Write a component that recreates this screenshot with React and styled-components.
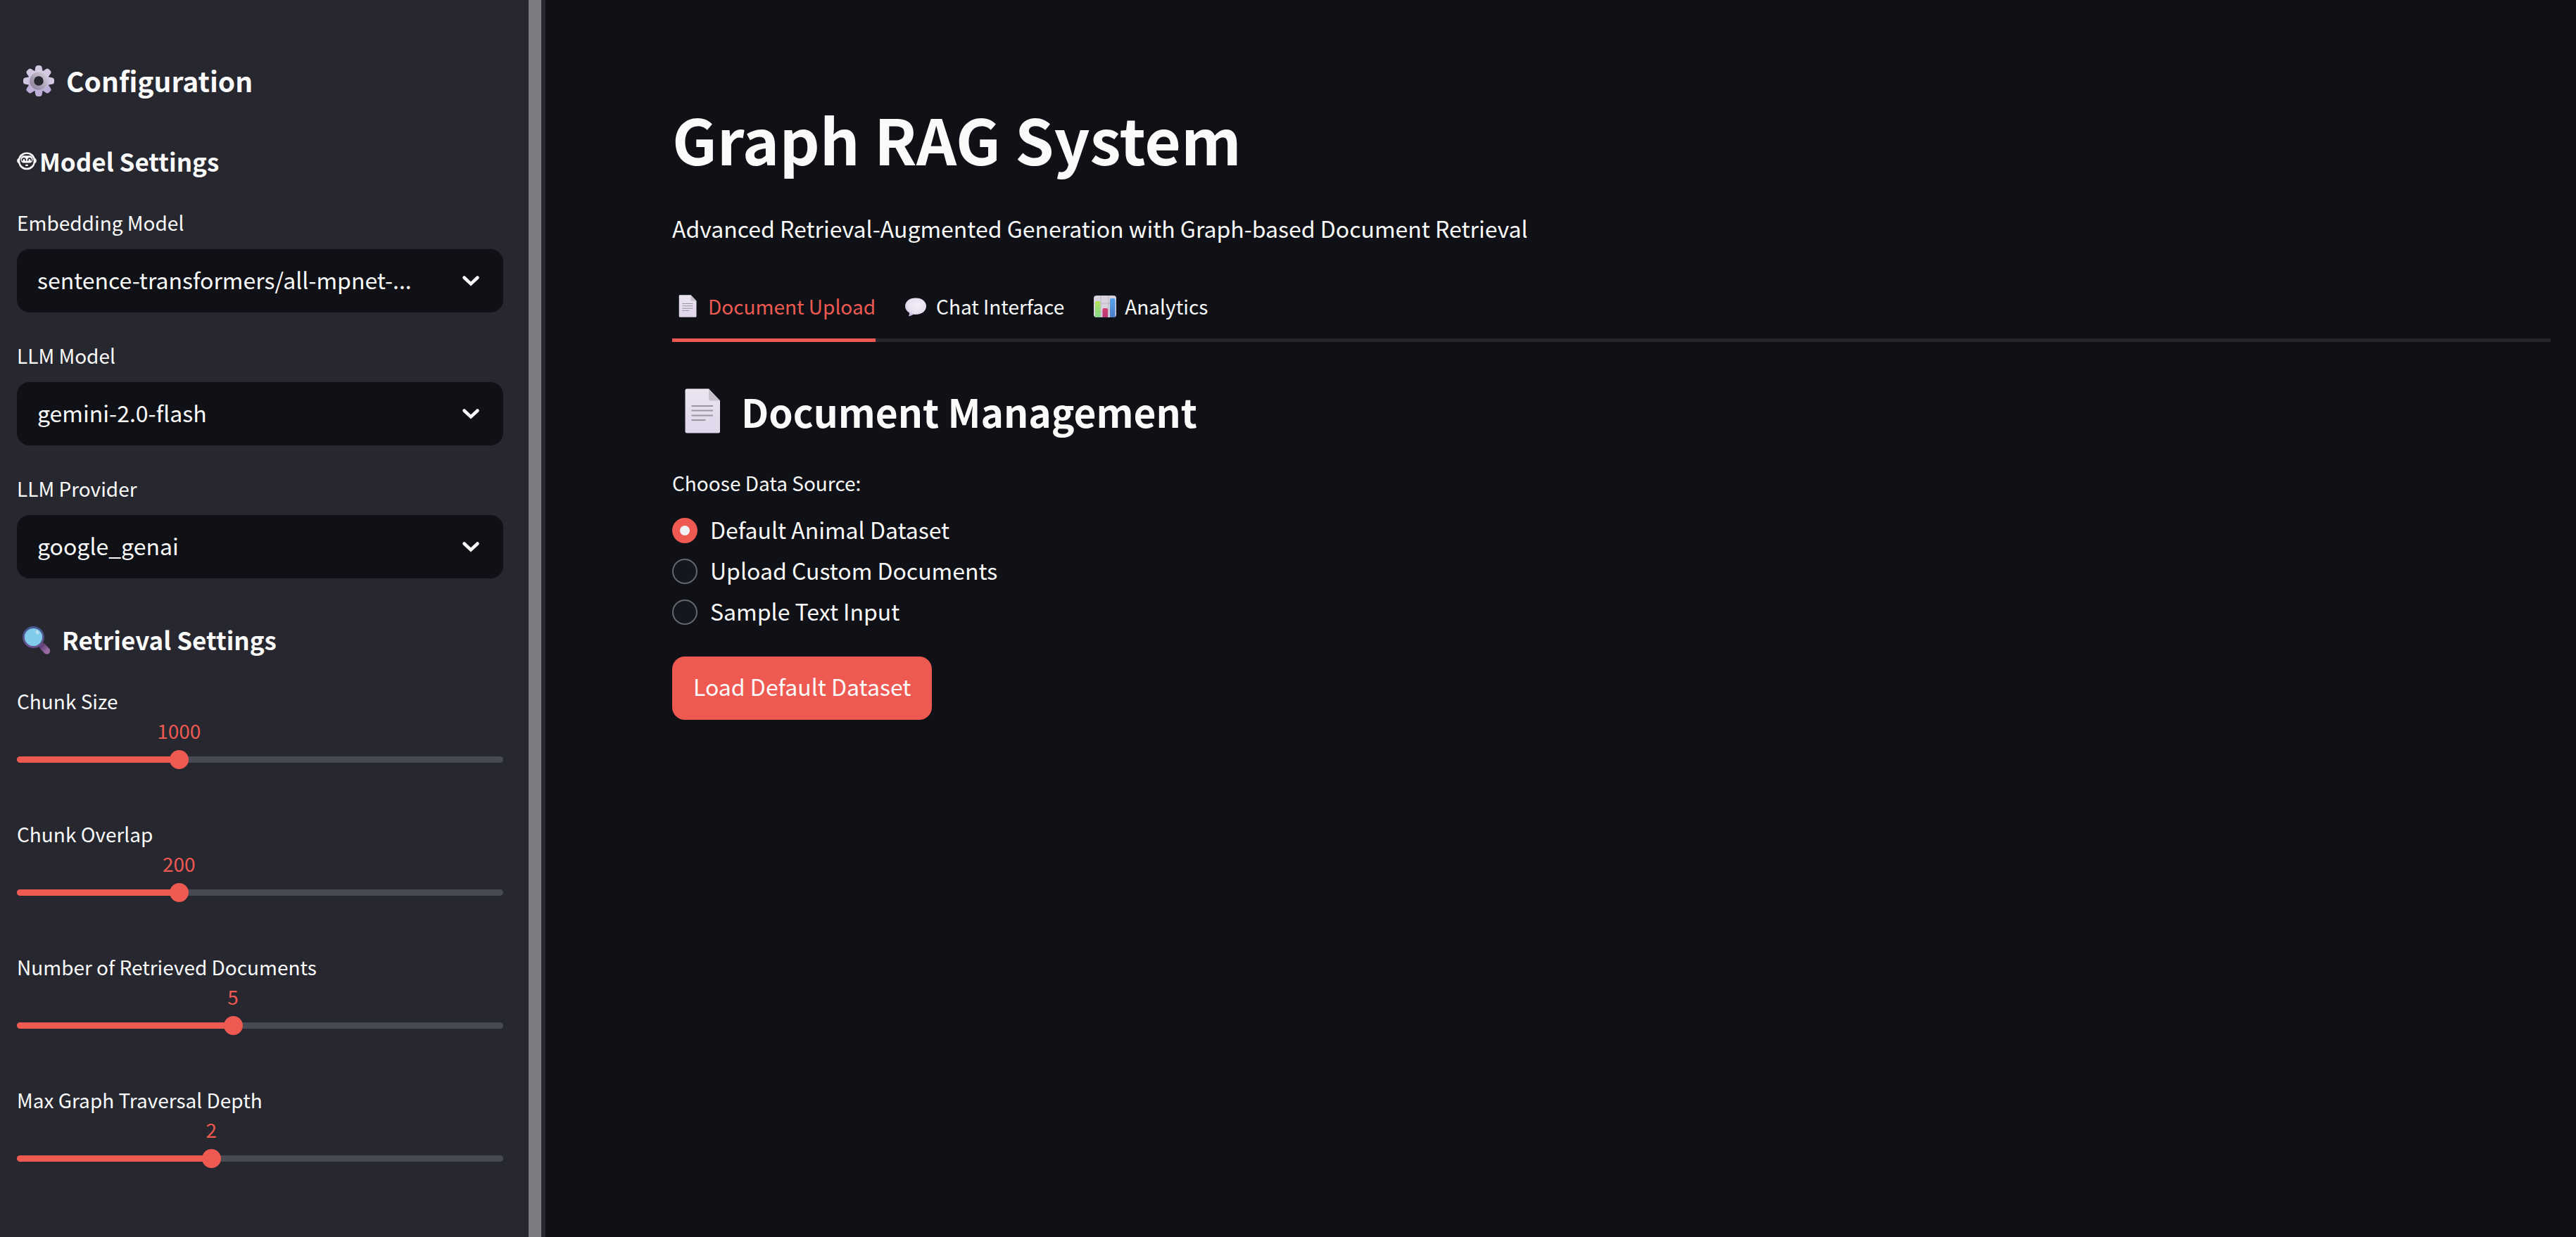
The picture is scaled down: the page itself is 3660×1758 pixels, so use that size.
import React, { useId, useState } from 'react';
import styled, { createGlobalStyle } from 'styled-components';

const color = {
  page: '#0f1116',
  panel: '#272730',
  text: '#fafafa',
  accent: '#ee5a52',
  rail: '#474a53',
  line: '#26272c',
  scroll: '#7d7c80',
};

const GlobalStyle = createGlobalStyle`
  *, *::before, *::after { box-sizing: border-box; }
  body {
    margin: 0;
    background: ${color.page};
    color: ${color.text};
    font-family: "Noto Sans CJK KR", "Noto Sans CJK SC", "Noto Sans", sans-serif;
  }
  h1, h2, h3, p { margin: 0; }
  button, select, input { font: inherit; color: inherit; }
  svg { flex: none; }
`;

const Shell = styled.div`
  display: flex;
  min-height: 100vh;
`;

const Sidebar = styled.aside`
  display: flex;
  flex: none;
  width: 775px;
  padding-right: 6px;
  background: ${color.panel};
`;

const SidebarBody = styled.div`
  display: flex;
  flex: 1;
  flex-direction: column;
  gap: 36px;
  min-width: 0;
  padding: 88px 36px 36px 24px;
`;

const ScrollThumb = styled.div`
  width: 18px;
  background: ${color.scroll};
`;

const SidebarTitle = styled.h2`
  display: flex;
  align-items: center;
  gap: 9px;
  padding: 0 0 2px 1px;
  font-size: 39px;
  line-height: 52px;
  font-weight: 600;
`;

const SectionTitle = styled.h3`
  display: flex;
  align-items: center;
  gap: ${(p) => (p.$tight ? '4px' : '8px')};
  padding: 26px 0 1px;
  font-size: 35px;
  line-height: 50px;
  font-weight: 600;
`;

const Field = styled.div`
  display: flex;
  flex-direction: column;
`;

const FieldLabel = styled.label`
  height: 63px;
  font-size: 28px;
  line-height: 50px;
`;

const SelectFrame = styled.div`
  display: grid;
  align-items: center;
  height: 90px;
  border-radius: 18px;
  background: ${color.page};

  & > * { grid-area: 1 / 1; }
  & > svg {
    justify-self: end;
    margin-right: 33px;
    pointer-events: none;
  }
`;

const Select = styled.select`
  width: 100%;
  height: 90px;
  padding: 0 80px 4px 29px;
  border: 0;
  border-radius: 18px;
  background: transparent;
  appearance: none;
  font-size: 32px;

  option { background: ${color.page}; }
`;

const SliderBox = styled.div`
  position: relative;
  display: grid;
  align-items: center;
  height: 90px;

  & > div, & > input { grid-area: 1 / 1; }
`;

const SliderValue = styled.output`
  position: absolute;
  top: -16px;
  transform: translateX(-50%);
  color: ${color.accent};
  font-size: 28px;
  line-height: 40px;
`;

const Rail = styled.div`
  height: 9px;
  border-radius: 5px;
  background: ${color.rail};
  overflow: hidden;
`;

const RailFill = styled.div`
  height: 100%;
  background: ${color.accent};
`;

const Range = styled.input`
  width: calc(100% + 28px);
  height: 27px;
  margin: 0 -14px;
  background: transparent;
  appearance: none;

  &::-webkit-slider-runnable-track { height: 27px; background: transparent; }
  &::-webkit-slider-thumb {
    width: 27px;
    height: 27px;
    border: 0;
    border-radius: 50%;
    background: ${color.accent};
    appearance: none;
  }
`;

const Main = styled.main`
  display: flex;
  flex: 1;
  flex-direction: column;
  min-width: 0;
  padding: 136px 36px 36px 180px;
`;

const PageTitle = styled.h1`
  font-size: 89px;
  line-height: 122px;
  font-weight: 700;
`;

const Lead = styled.p`
  margin-top: 37px;
  font-size: 32px;
  line-height: 58px;
`;

const TabBar = styled.div`
  display: flex;
  gap: 36px;
  height: 90px;
  margin-top: 43px;
  box-shadow: inset 0 -5px 0 ${color.line};
`;

const Tab = styled.button`
  display: flex;
  align-items: center;
  gap: 6px;
  padding: 0 0 12px;
  border: 0;
  background: none;
  color: ${(p) => (p.$active ? color.accent : color.text)};
  box-shadow: ${(p) => (p.$active ? `inset 0 -5px 0 ${color.accent}` : 'none')};
  font-size: 28px;
  line-height: 40px;
  cursor: pointer;
`;

const PanelTitle = styled.h2`
  display: flex;
  align-items: center;
  gap: 10px;
  margin-top: 60px;
  font-size: 55px;
  line-height: 76px;
  font-weight: 600;
`;

const RadioGroup = styled.fieldset`
  margin: 38px 0 0;
  padding: 0;
  border: 0;
`;

const Legend = styled.legend`
  padding: 0 0 13px;
  font-size: 28px;
  line-height: 52px;
`;

const RadioRow = styled.label`
  display: flex;
  align-items: center;
  gap: 18px;
  height: 58px;
  font-size: 32px;
`;

const RadioText = styled.span`
  padding-bottom: 4px;
`;

const Radio = styled.input`
  width: 36px;
  height: 36px;
  margin: 0;
  border: 2px solid #65666b;
  border-radius: 50%;
  background: #131720;
  appearance: none;

  &:checked {
    border: 11px solid ${color.accent};
    background: #f0f2f6;
  }
`;

const PrimaryButton = styled.button`
  align-self: flex-start;
  height: 90px;
  margin-top: 34px;
  padding: 0 30px 6px;
  border: 0;
  border-radius: 18px;
  background: ${color.accent};
  font-size: 32px;
  cursor: pointer;
`;

function GearIcon() {
  const teeth = [0, 45, 90, 135, 180, 225, 270, 315];
  return (
    <svg width="60" height="52" viewBox="-30 -27 60 52" aria-hidden="true">
      <defs>
        <linearGradient id="gearTeeth" x1="0" y1="0" x2="0" y2="1">
          <stop offset="0" stopColor="#dad2e6" />
          <stop offset="1" stopColor="#bcadd6" />
        </linearGradient>
        <linearGradient id="gearRing" x1="1" y1="0" x2="0" y2="1">
          <stop offset="0" stopColor="#d0c9d6" />
          <stop offset="1" stopColor="#8f849d" />
        </linearGradient>
      </defs>
      {teeth.map((a) => (
        <path
          key={a}
          transform={`rotate(${a})`}
          d="M-6 -12 L-4.6 -19.5 Q-4 -22 -1.5 -22 H1.5 Q4 -22 4.6 -19.5 L6 -12 Z"
          fill={a > 90 && a < 270 ? '#bcaed6' : '#d2c8e2'}
        />
      ))}
      <circle r="15" fill="url(#gearTeeth)" />
      <circle r="9.6" fill="none" stroke="url(#gearRing)" strokeWidth="6.4" />
      <circle r="6.8" fill={color.panel} />
    </svg>
  );
}

function FaceIcon() {
  return (
    <svg width="28" height="26" viewBox="0 0 28 26" fill="none" aria-hidden="true">
      <path
        d="M14 .5c6.500 0 10.300 3.600 11.600 8.300 1.500.7 2.200 2.200 2.200 3.700s-.7 3-2.200 3.700C24.300 21.500 20.200 25.300 14 25.300S3.700 21.500 2.400 16.200C.9 15.500.2 14 .2 12.500s.7-3 2.200-3.700C3.700 4.100 7.500.5 14 .5z"
        fill={color.text}
      />
      <ellipse cx="14" cy="12.800" rx="9.800" ry="10" fill={color.panel} />
      <path
        d="M9.500 5.200h9c2.500 0 4 2.600 4 5.300 0 3.200-2 5-4.500 5h-8c-2.500 0-4.500-1.800-4.500-5 0-2.700 1.500-5.300 4-5.300z"
        fill={color.text}
      />
      <path
        d="M7.600 11.800c.6-4 4.200-4 4.800 0M15.600 11.800c.6-4 4.200-4 4.800 0"
        stroke={color.panel}
        strokeWidth="1.700"
        strokeLinecap="round"
      />
      <rect x="12" y="17.800" width="4" height="2.200" rx="1" fill={color.text} />
    </svg>
  );
}

function SearchIcon() {
  return (
    <svg width="56" height="50" viewBox="0 -1 56 50" aria-hidden="true">
      <defs>
        <linearGradient id="searchHandle" x1="0" y1="0" x2="1" y2="1">
          <stop offset="0" stopColor="#63407a" />
          <stop offset="1" stopColor="#9a6ba3" />
        </linearGradient>
        <linearGradient id="searchRim" x1="0" y1="0" x2="0" y2="1">
          <stop offset="0" stopColor="#41598f" />
          <stop offset="1" stopColor="#6b4f8c" />
        </linearGradient>
      </defs>
      <path d="M36 33 L42.500 40" stroke="url(#searchHandle)" strokeWidth="9.500" strokeLinecap="round" />
      <circle cx="23.500" cy="20.500" r="14" fill="#7fcbe9" stroke="url(#searchRim)" strokeWidth="2.800" />
      <ellipse cx="29" cy="13.500" rx="2.200" ry="3" fill="#b6e0f2" transform="rotate(-30 29 13.500)" />
    </svg>
  );
}

function PageIcon({ width, height }) {
  return (
    <svg width={width} height={height} viewBox="0 0 88 76" aria-hidden="true">
      <defs>
        <linearGradient id="pageBody" x1="0" y1="0" x2="0" y2="1">
          <stop offset="0" stopColor="#ebe5f1" />
          <stop offset="1" stopColor="#ded6ea" />
        </linearGradient>
      </defs>
      <path d="M21 6.500h31l16 17V67q0 2.500-2.500 2.500h-44.500q-2.500 0-2.500-2.500V9q0-2.500 2.500-2.500z" fill="url(#pageBody)" />
      <path d="M52 6.500l16 17H54q-2 0-2-2z" fill="#c8c2ce" />
      <path d="M27.500 31h30.500M27.500 37.500h30.500M27.500 44.500h30.500M27.500 51h20" stroke="#9a94a2" strokeWidth="2.200" />
    </svg>
  );
}

function ChatIcon() {
  return (
    <svg width="44" height="40" viewBox="0 0 44 40" aria-hidden="true">
      <defs>
        <radialGradient id="bubble" cx="0.55" cy="0.4" r="0.65">
          <stop offset="0" stopColor="#f5f1f8" />
          <stop offset="0.700" stopColor="#e4dcee" />
          <stop offset="1" stopColor="#b9acd3" />
        </radialGradient>
      </defs>
      <path
        d="M21 8.500c8.800 0 15 4.800 15 11.500 0 7-6.200 12-15 12-1.200 0-2.400-.1-3.500-.3-1.800 1.300-3.700 2.300-5.800 2.800-.7.100-1-.3-.6-.9.800-1.300 1-2.600.8-4C8.200 27.500 6 24.300 6 20 6 13.300 12.200 8.500 21 8.500z"
        fill="url(#bubble)"
      />
    </svg>
  );
}

function ChartIcon() {
  return (
    <svg width="44" height="40" viewBox="0 0 44 40" aria-hidden="true">
      <defs>
        <linearGradient id="barGreen" x1="0" y1="0" x2="0" y2="1">
          <stop offset="0" stopColor="#b5e35b" />
          <stop offset="1" stopColor="#83d58c" />
        </linearGradient>
        <linearGradient id="barRed" x1="0" y1="0" x2="0" y2="1">
          <stop offset="0" stopColor="#d23f6f" />
          <stop offset="1" stopColor="#b8397a" />
        </linearGradient>
        <linearGradient id="barBlue" x1="0" y1="0" x2="0" y2="1">
          <stop offset="0" stopColor="#57a5ee" />
          <stop offset="1" stopColor="#4a7cc8" />
        </linearGradient>
      </defs>
      <rect x="6" y="5" width="32" height="31" rx="4" fill="#d9d2df" />
      <path d="M16 5v31M27 5v31M6 16h32M6 28h32" stroke="#bdb6c4" strokeWidth="1" />
      <path d="M8 36V15q0-2 2-2h3.500q2 0 2 2v21z" fill="url(#barGreen)" />
      <path d="M18.500 36V25q0-2 2-2h3.500q2 0 2 2v11z" fill="url(#barRed)" />
      <path d="M29 36V11q0-2 2-2h3.500q2 0 2 2v25z" fill="url(#barBlue)" />
    </svg>
  );
}

function Chevron() {
  return (
    <svg width="26" height="18" viewBox="0 0 26 18" fill="none" aria-hidden="true">
      <path d="M3.500 4.500L13 13.500L22.500 4.500" stroke={color.text} strokeWidth="4.500" strokeLinecap="round" />
    </svg>
  );
}

const MAX_OPTION_LENGTH = 35;

function shorten(name) {
  return name.length > MAX_OPTION_LENGTH ? `${name.slice(0, 32)}...` : name;
}

function SelectField({ label, options }) {
  const id = useId();
  return (
    <Field>
      <FieldLabel htmlFor={id}>{label}</FieldLabel>
      <SelectFrame>
        <Select id={id} defaultValue={options[0]}>
          {options.map((o) => (
            <option key={o} value={o}>{shorten(o)}</option>
          ))}
        </Select>
        <Chevron />
      </SelectFrame>
    </Field>
  );
}

function SliderField({ label, min, max, step, initial }) {
  const id = useId();
  const [value, setValue] = useState(initial);
  const share = `${((value - min) / (max - min)) * 100}%`;
  return (
    <Field>
      <FieldLabel htmlFor={id}>{label}</FieldLabel>
      <SliderBox>
        <SliderValue htmlFor={id} style={{ left: share }}>{value}</SliderValue>
        <Rail>
          <RailFill style={{ width: share }} />
        </Rail>
        <Range
          id={id}
          type="range"
          min={min}
          max={max}
          step={step}
          value={value}
          onChange={(e) => setValue(Number(e.target.value))}
        />
      </SliderBox>
    </Field>
  );
}

const tabs = [
  { name: 'Document Upload', icon: <PageIcon width={45} height={38} /> },
  { name: 'Chat Interface', icon: <ChatIcon /> },
  { name: 'Analytics', icon: <ChartIcon /> },
];

const sources = ['Default Animal Dataset', 'Upload Custom Documents', 'Sample Text Input'];

export default function App() {
  const [tab, setTab] = useState(tabs[0].name);
  const [source, setSource] = useState(sources[0]);
  return (
    <>
      <GlobalStyle />
      <Shell>
        <Sidebar>
          <SidebarBody>
            <SidebarTitle><GearIcon />Configuration</SidebarTitle>
            <SectionTitle $tight><FaceIcon />Model Settings</SectionTitle>
            <SelectField label="Embedding Model" options={['sentence-transformers/all-mpnet-base-v2']} />
            <SelectField label="LLM Model" options={['gemini-2.0-flash']} />
            <SelectField label="LLM Provider" options={['google_genai']} />
            <SectionTitle><SearchIcon />Retrieval Settings</SectionTitle>
            <SliderField label="Chunk Size" min={500} max={2000} step={100} initial={1000} />
            <SliderField label="Chunk Overlap" min={50} max={500} step={50} initial={200} />
            <SliderField label="Number of Retrieved Documents" min={1} max={10} step={1} initial={5} />
            <SliderField label="Max Graph Traversal Depth" min={0} max={5} step={1} initial={2} />
          </SidebarBody>
          <ScrollThumb />
        </Sidebar>
        <Main>
          <PageTitle>Graph RAG System</PageTitle>
          <Lead>Advanced Retrieval-Augmented Generation with Graph-based Document Retrieval</Lead>
          <TabBar role="tablist">
            {tabs.map((t) => (
              <Tab
                key={t.name}
                role="tab"
                aria-selected={t.name === tab}
                $active={t.name === tab}
                onClick={() => setTab(t.name)}
              >
                {t.icon}
                {t.name}
              </Tab>
            ))}
          </TabBar>
          <PanelTitle><PageIcon width={88} height={76} />Document Management</PanelTitle>
          <RadioGroup>
            <Legend>Choose Data Source:</Legend>
            {sources.map((s) => (
              <RadioRow key={s}>
                <Radio type="radio" name="source" checked={s === source} onChange={() => setSource(s)} />
                <RadioText>{s}</RadioText>
              </RadioRow>
            ))}
          </RadioGroup>
          <PrimaryButton>Load Default Dataset</PrimaryButton>
        </Main>
      </Shell>
    </>
  );
}
